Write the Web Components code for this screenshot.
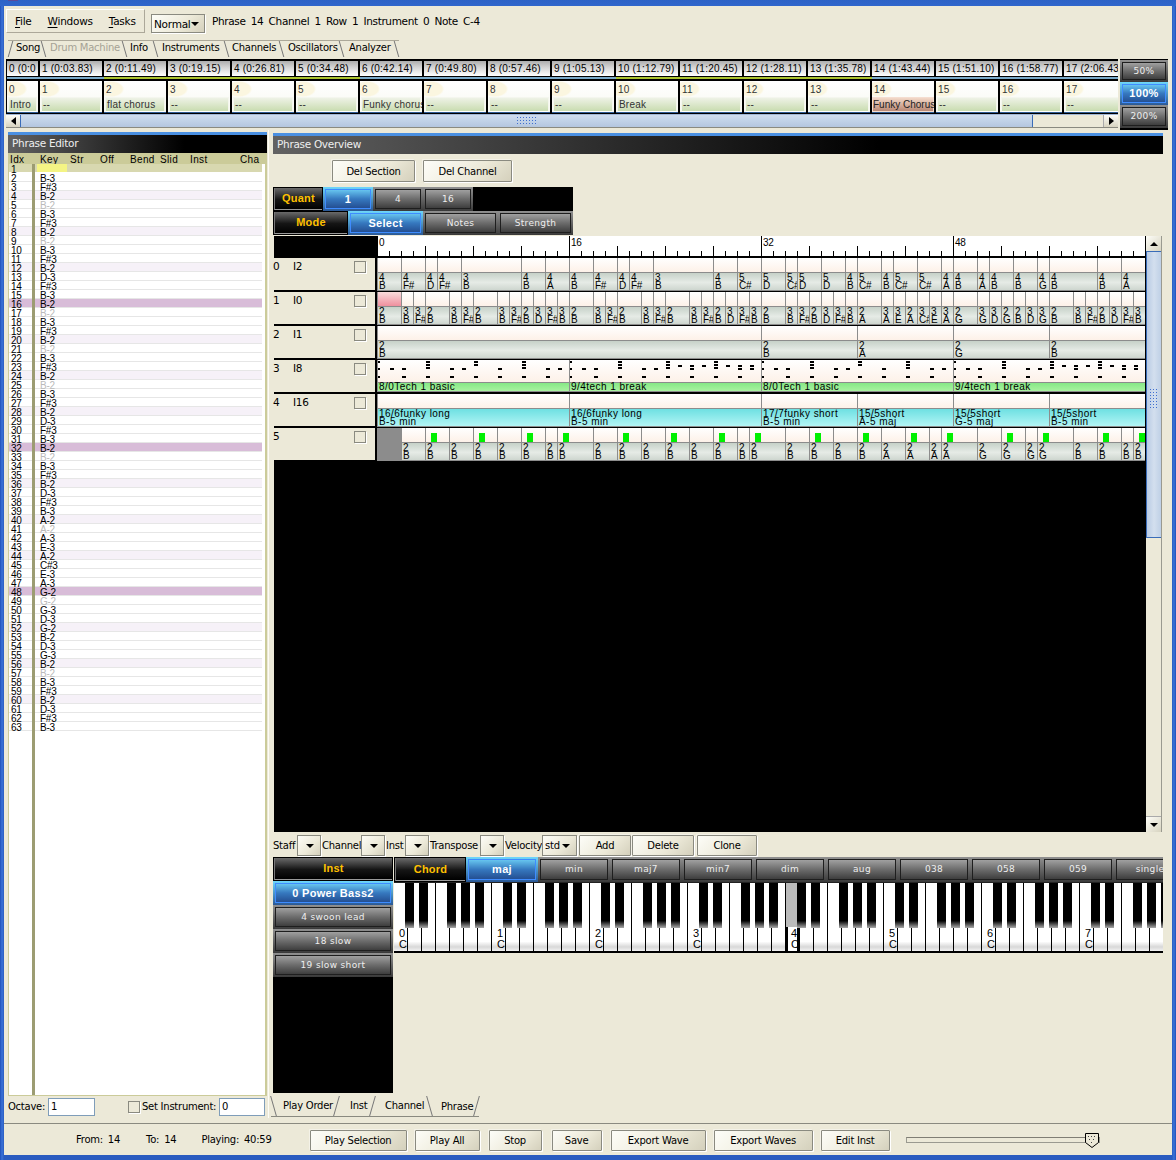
<!DOCTYPE html>
<html><head><meta charset="utf-8"><style>
html,body{margin:0;padding:0;background:#2a5cc0}
</style></head><body>
<x-app></x-app>
<script>
const def=(name,css,render)=>customElements.define(name,class extends HTMLElement{
  connectedCallback(){ if(this.shadowRoot)return; const s=this.attachShadow({mode:'open'}); s.innerHTML='<style>'+css+'</style>'+render(this); }
});
const UI='font:10px/12px "DejaVu Sans",sans-serif;letter-spacing:-.25px;color:#000;';
const NUM='font:10px/8px "Liberation Sans",sans-serif;color:#000;';

def('x-xp',`:host{display:inline-flex;box-sizing:border-box;align-items:center;justify-content:center;flex:none;${UI}
 height:22px;padding-top:1px;border:1px solid #8a8a80;box-shadow:1px 1px 0 #fff,-1px -1px 0 #f4f2e8;background:linear-gradient(135deg,#fdfdf8,#ece9d8 60%,#d4d0bc);border-radius:1px}`,()=>'<slot></slot>');

def('x-combo',`:host{display:inline-flex;box-sizing:border-box;align-items:center;justify-content:space-between;flex:none;${UI}
 height:22px;border:1px solid #8a8a80;box-shadow:1px 1px 0 #fff;background:linear-gradient(135deg,#fdfdf8,#ece9d8 60%,#d4d0bc);padding:0 6px 0 2px}
 i{width:0;height:0;border:4px solid transparent;border-top:4px solid #000;border-bottom:0;margin-left:auto}`,()=>'<slot></slot><i></i>');

def('x-glass',`:host{display:inline-flex;box-sizing:border-box;padding:2px;background:linear-gradient(#909090,#3a3a3a);height:24px;flex:none}
 div{flex:1;box-sizing:border-box;min-width:0;border:1px solid #1e1e1e;background:linear-gradient(#a0a0a0,#6c6c6c 50%,#3e3e3e);color:#eee;
 font:9px/1 "DejaVu Sans",sans-serif;letter-spacing:.35px;display:flex;align-items:center;justify-content:center;white-space:nowrap;overflow:hidden}
 :host([kind=on]){background:linear-gradient(#6ed6fa,#2a5896)}
 :host([kind=on]) div{border-color:#3f8cff;background:linear-gradient(#66c4ee,#3678bf 50%,#244f92);color:#fff;font:bold 11px/1 "Liberation Sans",sans-serif;letter-spacing:.3px}
 :host([kind=tag]){background:#000;padding:1px}
 :host([kind=tag]) div{border:0;border-left:1px solid #777;border-bottom:1px solid #999;background:linear-gradient(#6a6a6a,#151515 55%,#000);color:#ffc000;font:bold 11px/1 "Liberation Sans",sans-serif;letter-spacing:.2px}`,
 ()=>'<div><slot></slot></div>');

def('x-paneltitle',`:host{display:block;${UI}color:#eee;font-size:10.5px;border-top:3px solid #4a90e2;height:18px;line-height:17px;padding-left:4px;letter-spacing:-.3px;
 background:linear-gradient(90deg,#626262,#000 68%)}`,()=>'<slot></slot>');

def('x-check',`:host{display:inline-block;box-sizing:border-box;width:12px;height:12px;border:1px solid #8a8a80;background:#ece9d8;box-shadow:1px 1px 0 #fff;flex:none}`,()=>'');

def('x-menubar',`:host{display:flex;box-sizing:border-box;width:139px;height:24px;align-items:center;gap:16px;padding-left:8px;${UI}font-size:10.5px;border:1px solid #aca899;border-top-color:#fff;border-left-color:#fff;background:#ece9d8}
 u{text-decoration-thickness:1px;text-underline-offset:2px}`,()=>'<span><u>F</u>ile</span><span><u>W</u>indows</span><span><u>T</u>asks</span>');

def('x-tabs',`:host{display:flex;${UI}height:17px}
 b{font-weight:400;display:flex;box-sizing:border-box;align-items:center;position:relative;white-space:nowrap;height:17px;border-top:1px solid #aca899}
 b span{position:relative;top:-1px}
 b::after{content:"";position:absolute;right:2px;top:0;bottom:0;width:1px;background:#777;transform:skewX(16deg)}
 b.g{color:#a5a295}
 b.a::before{content:"";position:absolute;left:2px;top:0;bottom:0;width:1px;background:#777;transform:skewX(-16deg)}
 :host([flip]){height:21px}
 :host([flip]) b{border-top:0;border-bottom:1px solid #8a8a80;height:21px}
 :host([flip]) b span{top:0}
 :host([flip]) b::after{transform:skewX(-16deg)}
 :host([flip]) b.a::before{transform:skewX(16deg)}
 :host([flip]) b.x::after{display:none}
 :host([flip]) b:last-child span{top:1px}`,
 e=>JSON.parse(e.getAttribute('items')).map(t=>`<b class="${t[3]||''}" style="width:${t[1]}px;padding-left:${t[2]}px"><span>${t[0]}</span></b>`).join(''));

def('x-songcol',`:host{display:flex;flex-direction:column;flex:none;box-sizing:border-box;width:64px;height:52px;overflow:hidden}
 .h{height:15px;margin-right:2px;background:linear-gradient(#aeaeae,#d6d6d6 45%,#fff);font:10px/16px "Liberation Sans",sans-serif;letter-spacing:.22px;color:#000;white-space:nowrap;overflow:hidden;padding-left:2px}
 .s{height:2px;margin-top:1px;background:var(--c)}
 .b{height:32px;margin:2px 2px 0 0;background:linear-gradient(#fff,#f7f8f0);position:relative;display:flex;flex-direction:column;overflow:hidden;box-sizing:border-box;border-bottom:1px solid #2c5a90}
 .n{position:relative;height:17px;padding:4px 0 0 2px;box-sizing:border-box;font:10px/10px "Liberation Sans",sans-serif;letter-spacing:.3px;color:#333}
 .n::before{content:"";position:absolute;left:0;top:0;width:20px;height:16px;background:radial-gradient(ellipse at 35% 50%,#fbf6e0 60%,transparent 72%)}
 .n span{position:relative}
 .l{flex:1;margin:0 1px;border:1px solid #f4f6ee;border-bottom-color:#fff;background:linear-gradient(#eef2e6,#c9dcb0);font:10px/13px "Liberation Sans",sans-serif;letter-spacing:.2px;color:#333;white-space:nowrap;padding-left:1px}
 :host([hot]) .l{margin:0;border-color:#f4ddd0;background:linear-gradient(#f3d8c8,#b98874);color:#222;letter-spacing:0;padding-left:0}`,
 e=>`<div class="h">${e.getAttribute('t')}</div><div class="s" style="--c:${e.getAttribute('c')}"></div><div class="b"><div class="n"><span>${e.getAttribute('n')}</span></div><div class="l">${e.getAttribute('l')}</div></div>`);

const songT=['0 (0:0','1 (0:03.83)','2 (0:11.49)','3 (0:19.15)','4 (0:26.81)','5 (0:34.48)','6 (0:42.14)','7 (0:49.80)','8 (0:57.46)','9 (1:05.13)','10 (1:12.79)','11 (1:20.45)','12 (1:28.11)','13 (1:35.78)','14 (1:43.44)','15 (1:51.10)','16 (1:58.77)','17 (2:06.43)'];
const songL={0:'Intro',2:'flat chorus',6:'Funky chorus',10:'Break',14:'Funky Chorus'};
const BL='#7aa9c9',GR='#abc32f';
const songC=i=>(i<2||(i>=6&&i<10)||i>=14)?BL:GR;

def('x-song',`:host{display:block;box-sizing:border-box;width:1112px;height:69px;background:#000;overflow:hidden}
 .c{display:flex;padding:2px 0 0 1px;height:55px;box-sizing:border-box;overflow:hidden;background:#000}
 x-songcol:first-child{width:33px}
 .sb{display:flex;height:14px;background:#ece9d8;border-top:1px solid #9fb6d6;border-bottom:1px solid #8a8a80;box-sizing:border-box}
 .btn{width:15px;flex:none;background:linear-gradient(#fdfdf8,#d8d4c0);display:flex;align-items:center;justify-content:center;box-sizing:border-box;border-right:1px solid #3a6cb8}
 .btn i{width:0;height:0;border:4px solid transparent}
 .l i{border-right:5px solid #000;border-left:0}
 .r{border-right:0;border-left:1px solid #aaa}
 .r i{border-left:5px solid #000;border-right:0}
 .th{width:1011px;flex:none;background:linear-gradient(#d0dded,#c2d3e8 45%,#b4c6df);border-right:1px solid #3a6cb8;display:flex;justify-content:center;align-items:center}
 .th b{display:block;width:22px;height:10px;background:radial-gradient(circle,#3f6fd0 .7px,transparent 1px) 0 0/3px 3px}
 .e{flex:1}`,
 ()=>`<div class="c">${songT.map((t,i)=>`<x-songcol t="${t}" n="${i}" c="${songC(i)}" l="${songL[i]||'--'}" ${i==14?'hot':''}></x-songcol>`).join('')}</div>
 <div class="sb"><div class="btn l"><i></i></div><div class="th"><b></b></div><div class="e"></div><div class="btn r"><i></i></div></div>`);

def('x-zoomset',`:host{display:flex;flex-direction:column;width:48px;height:71px;background:#000;padding-top:1px;box-sizing:border-box}
 x-glass{height:23px}
 x-glass.a{height:22px}`,()=>'<x-glass class="a">50%</x-glass><x-glass kind="on">100%</x-glass><x-glass>200%</x-glass>');

/* ---------- Phrase editor ---------- */
const seq=('|B-3|F#3|B-2|~B-2|B-3|F#3|B-2|~B-2|B-3|F#3|B-2|D-3|F#3|B-3|B-2|~B-2|B-3|F#3|B-2|~B-2|B-3|F#3|B-2|~B-2|B-3|F#3|B-2|D-3|F#3|B-3|B-2|~B-2|B-3|F#3|B-2|D-3|F#3|B-3|A-2|~A-2|A-3|E-3|A-2|C#3|E-3|A-3|G-2|~G-2|G-3|D-3|G-2|B-2|D-3|G-3|B-2|~B-2|B-3|F#3|B-2|D-3|F#3|B-3').split('|');
def('x-field',`:host{display:inline-block;box-sizing:border-box;height:18px;background:#fff;border:1px solid #7f9db9;${UI}line-height:16px;padding-left:2px;flex:none}`,()=>'<slot></slot>');
def('x-editor',`:host{display:flex;flex-direction:column;box-sizing:border-box;width:262px;height:988px;padding:2px 1px 0 1px;border:1px solid #fdfcf6;border-width:0 1px 0 0;${UI}}
 .tb{display:flex;flex-direction:column;height:943px;box-sizing:border-box;border:solid #cbcb99;border-width:0 2px 1px 1px;background:#fff}
 .hd{height:11px;background:#cbcb99;display:grid;grid-template-columns:30px 30px 30px 30px 30px 30px 50px 40px;padding-left:1px;font:10px/13px "Liberation Sans",sans-serif;letter-spacing:.35px;white-space:nowrap}
 .bd{flex:1;display:grid;grid-template-columns:23px 3px 1fr;min-height:0}
 .ix,.ke{display:flex;flex-direction:column}
 .dv{background:#9c9c72}
 .r{height:9px;box-sizing:border-box;font:10px/8.5px "Liberation Sans",sans-serif;border-bottom:1px solid #e6e6e6;white-space:nowrap;padding:2px 0 0 2px;flex:none}
 .ke{padding-right:3px}
 .ke .r{padding-left:5px}
 .t{background:#f6f1f8}
 .p{background:#d8bcd8}
 .s{background:#d8d8b0;border-bottom:1px solid #fff}
 .g{color:#bbb}
 .y{display:block;width:30px;height:8px;background:#f4f484;margin:-2px 0 0 -3px}
 .f{display:flex;align-items:center;height:20px;padding-top:1px;box-sizing:border-box;white-space:nowrap}
 x-field{margin-left:1px}
 .si{width:76px;flex:none;margin-left:2px}`,
 ()=>{
  let ix='',ke='';
  seq.forEach((v,i)=>{const n=i+1,g=v[0]=='~',p=n%16==0,t=n%4==0&&!p;
   const c=i==0?'s':p?'p':t?'t':'';
   ix+=`<div class="r ${i==0?'s':p?'p':t?'t':''}">${n}</div>`;
   ke+=`<div class="r ${c} ${g?'g':''}">${i==0?'<i class="y"></i>':g?v.slice(1):v}</div>`;});
  return `<x-paneltitle>Phrase Editor</x-paneltitle>
  <div class="tb"><div class="hd"><span>Idx</span><span>Key</span><span>Str</span><span>Off</span><span>Bend</span><span>Slid</span><span>Inst</span><span>Cha</span></div>
  <div class="bd"><div class="ix">${ix}</div><div class="dv"></div><div class="ke">${ke}</div></div></div>
  <div class="f"><span style="width:39px;flex:none">Octave:</span><x-field style="width:47px">1</x-field><x-check style="margin-left:33px"></x-check><span class="si">Set Instrument:</span><x-field style="width:46px">0</x-field></div>`;
 });

/* ---------- Tracks ---------- */
const dashes=pat=>{let s='';pat.forEach((ys,t)=>{(ys||[]).forEach(y=>{s+=`<rect x="${t*12}" y="${y}" width="${t?4:2}" height="2"/>`;});if(t%2==0)s+=`<rect x="${t*12}" y="16" width="${t?4:2}" height="2"/>`;});
 return `<svg width="192" height="22" shape-rendering="crispEdges" style="display:block;position:absolute;left:0;top:0">${s}</svg>`;};
const T3=[1,4,7],M=[8];
const PA=[[1,8],M,M,0,T3,0,M,M,[1,4],0,M,0,T3,0,M,M];
const PB=[[1,8],M,M,0,T3,0,M,M,T3,[5],[5,8],[5],T3,[5],[5,8],[5,8]];
def('x-track',`:host{display:grid;grid-template-columns:101px 2px 768px;height:34px;box-sizing:border-box;padding-bottom:2px;background:#000}
 .lb{background:#ece9d8;position:relative;${UI}font-size:10.5px;line-height:16px;display:grid;grid-template-columns:19px 61px 1fr;align-items:start;height:32px;box-sizing:border-box}
 .lb span:first-child{margin-left:-1px}
 .lb x-check{margin-top:3px}
 .cells{grid-column:3;display:grid;grid-template-columns:repeat(64,12px);height:32px}
 .n{display:flex;flex-direction:column;min-width:0;border-left:1px solid #8c8c8c;box-sizing:border-box;position:relative}
 .u{height:var(--u,14px);background:linear-gradient(#fff,#fdf1e8);flex:none;position:relative}
 .u.sel{background:linear-gradient(#f9dcdc,#ef8f9e)}
 .d{flex:1;border-top:1px solid #8c8c8c;border-bottom:1px solid #8c8c8c;background:linear-gradient(#c6d1c8,#e6ebe6 55%,#ced6cf);${NUM}padding:1px 0 0 1px;white-space:nowrap;box-sizing:border-box}
 .d.g{background:linear-gradient(#86e886,#a9f2a0);font:10px/8px "Liberation Sans",sans-serif;letter-spacing:.45px;padding:0 0 0 1px}
 .d.c{background:linear-gradient(#6ee0e2,#b2f5f5);font:10px/8px "Liberation Sans",sans-serif;letter-spacing:.45px;padding:1px 0 0 1px}
 .off{background:#8c8c8c;grid-column:1/3}
 .gm{position:absolute;left:5px;top:5px;width:6px;height:9px;background:#00f000}`,
 e=>{
  const a=e.getAttribute.bind(e),raw=a('notes').split(',').map(x=>{const i=x.indexOf(':');return [+x.slice(0,i),x.slice(i+1)];});
  const kind=a('kind')||'',gm=(a('gm')||'').split(',').filter(Boolean).map(Number);
  const pats={0:PA,16:PB,32:PA,48:PB};
  const cells=raw.map((r,i)=>{const end=i+1<raw.length?raw[i+1][0]:64;let label='',cls='',u='';
    if(kind=='g'){cls='g';label=r[1];u=dashes(pats[r[0]]);}
    else if(kind=='c'){cls='c';label=r[1].replace('|','<br>');}
    else label=r[1][0]+'<br>'+r[1].slice(1);
    const sel=a('sel')!=null&&i==0?'sel':'';
    return `<div class="n" style="grid-column:${r[0]+1}/${end+1};${kind=='g'?'--u:22px':''}"><div class="u ${sel}">${u}${gm.includes(r[0])?'<i class="gm"></i>':''}</div><div class="d ${cls}">${label}</div></div>`;}).join('');
  return `<div class="lb"><span>${a('i')}</span><span>${a('inst')||''}</span><x-check></x-check></div><div></div><div class="cells">${a('off')!=null?'<div class="off"></div>':''}${cells}</div>`;
 });

def('x-ruler',`:host{display:grid;grid-template-columns:103px repeat(4,192px);height:22px;background:#000}
 div{box-sizing:border-box;background-color:#fff;border-left:1px solid #000;font:10px/13px "Liberation Sans",sans-serif;padding-left:1px;color:#000;
 background-image:linear-gradient(#000,#000),repeating-linear-gradient(90deg,#000 0 1px,transparent 1px 48px),repeating-linear-gradient(90deg,#000 0 1px,transparent 1px 12px);
 background-size:100% 2px,100% 10px,100% 5px;background-position:0 100%,47px calc(100% - 2px),11px calc(100% - 2px);background-repeat:no-repeat}
 div.blank{background:#000;border:0}`,()=>'<div class="blank"></div><div>0</div><div>16</div><div>32</div><div>48</div>');

def('x-vscroll',`:host{display:flex;flex-direction:column;width:16px;height:596px;background:#ece9d8;flex:none;box-sizing:border-box;border-right:1px solid #9a9a90}
 .b{height:16px;flex:none;background:linear-gradient(135deg,#fdfdf8,#d8d4c0);display:flex;align-items:center;justify-content:center;border-bottom:1px solid #3a6cb8;box-sizing:border-box}
 .b i{width:0;height:0;border:4px solid transparent;border-top:0;border-bottom:4px solid #000}
 .b.d{border-bottom:0;border-top:1px solid #aaa}.b.d i{border:4px solid transparent;border-bottom:0;border-top:4px solid #000}
 .t{height:286px;flex:none;background:linear-gradient(90deg,#b9cbe4,#d3dfee 50%,#bfd0e6);border:solid #3a6cb8;border-width:0 0 1px 1px;display:flex;align-items:center;justify-content:center;box-sizing:border-box}
 .t b{display:block;width:10px;height:22px;margin-top:9px;background:radial-gradient(circle,#3f6fd0 .7px,transparent 1px) 0 0/3px 3px}
 .e{flex:1}`,()=>'<div class="b"><i></i></div><div class="t"><b></b></div><div class="e"></div><div class="b d"><i></i></div>');

/* ---------- Piano ---------- */
def('x-piano',`:host{display:block;position:relative;height:71px;width:769px;overflow:hidden;border-top:1px solid #222;border-bottom:2px solid #000;box-sizing:border-box;background:#fff;${NUM}}
 .w{display:flex;height:100%}
 .w i{flex:none;width:14px;box-sizing:border-box;border-right:1px solid #000;background:linear-gradient(#fff 0 86%,#d8d8d8 94%,#f2f2f2);font-style:normal;text-align:left;padding-left:5px;display:flex;flex-direction:column;justify-content:flex-end;line-height:11px;font-size:11px;padding-bottom:1px;letter-spacing:0}
 .w i.on{background:linear-gradient(90deg,#000 2px,transparent 2px 11px,#000 11px) 0 100%/100% 24px no-repeat,linear-gradient(#bbb 0 44px,#fff 44px)}
 .k{position:absolute;top:0;width:9px;height:45px;background:linear-gradient(#000 0 84%,#555 92%,#aaa)}`,
 ()=>{let w='',k='';
  for(let i=0;i<56;i++){const oct=Math.floor(i/7),c=i%7==0;w+=`<i class="${i==28?'on':''}">${c?`<span>${oct}</span><span>C</span>`:''}</i>`;}
  for(let o=0;o<8;o++)[11,25,53,67,81].forEach(x=>{k+=`<b class="k" style="left:${o*98+x}px"></b>`;});
  return `<div class="w">${w}</div>${k}`;});

/* ---------- Overview ---------- */
const notes0='0:4B,2:4F#,4:4D,5:4F#,7:3B,12:4B,14:4A,16:4B,18:4F#,20:4D,21:4F#,23:3B,28:4B,30:5C#,32:5D,34:5C#,35:5D,37:5D,39:4B,40:5C#,42:4B,43:5C#,45:5C#,47:4A,48:4B,50:4A,51:4B,53:4B,55:4G,56:4B,60:4B,62:4A';
const notes1='0:2B,2:3B,3:3F#,4:2B,6:3B,7:3F#,8:2B,10:3B,11:3F#,12:2B,13:3D,14:3F#,15:3B,16:2B,18:3B,19:3F#,20:2B,22:3B,23:3F#,24:2B,26:3B,27:3F#,28:2B,29:3D,30:3F#,31:3B,32:2B,34:3B,35:3F#,36:2B,37:3D,38:3F#,39:3B,40:2A,42:3A,43:3E,44:2A,45:3C#,46:3E,47:3A,48:2G,50:3G,51:3D,52:2G,53:2B,54:3D,55:3G,56:2B,58:3B,59:3F#,60:2B,61:3D,62:3F#,63:3B';
const notes5='2:2B,4:2B,6:2B,8:2B,10:2B,12:2B,14:2B,15:2B,18:2B,20:2B,22:2B,24:2B,26:2B,28:2B,30:2B,31:2B,34:2B,36:2B,38:2B,40:2B,42:2A,44:2A,46:2A,47:2A,50:2G,52:2G,54:2G,55:2G,58:2B,60:2B,62:2B,63:2B';
def('x-overview',`:host{display:flex;flex-direction:column;box-sizing:border-box;width:894px;height:988px;padding:3px 3px 0 1px;${UI}}
 .dl{display:flex;height:33px;padding:6px 0 0 59px;gap:8px;box-sizing:border-box}
 .q{display:flex;width:300px;height:24px;background:#000}
 .area{display:flex;height:596px;margin:1px 0 0 1px}
 .tracks{width:872px;background:#000;flex:none}
 .tool{display:flex;align-items:center;height:23px;margin-top:2px;white-space:nowrap}
 .tool x-combo,.tool x-xp{height:21px}
 .tool span{flex:none}
 .bot{display:flex;height:236px}
 .ins{width:120px;flex:none;background:#000;display:flex;flex-direction:column}
 .ins x-glass{width:120px}
 .keys{margin-left:1px;width:769px;flex:none;overflow:hidden}
 .ch{display:flex;height:25px;width:769px;overflow:hidden;background:#000}
 .ch x-glass{width:72px;height:25px}`,
 ()=>`<x-paneltitle>Phrase Overview</x-paneltitle>
 <div class="dl"><x-xp style="width:83px">Del Section</x-xp><x-xp style="width:89px">Del Channel</x-xp></div>
 <div class="q"><x-glass kind="tag" style="width:50px">Quant</x-glass><x-glass kind="on" style="width:50px">1</x-glass><x-glass style="width:50px">4</x-glass><x-glass style="width:50px">16</x-glass></div>
 <div class="q"><x-glass kind="tag" style="width:75px">Mode</x-glass><x-glass kind="on" style="width:75px">Select</x-glass><x-glass style="width:75px">Notes</x-glass><x-glass style="width:75px">Strength</x-glass></div>
 <div class="area"><div class="tracks"><x-ruler></x-ruler>
 <x-track i="0" inst="I2" notes="${notes0}"></x-track>
 <x-track i="1" inst="I0" sel notes="${notes1}"></x-track>
 <x-track i="2" inst="I1" notes="0:2B,32:2B,40:2A,48:2G,56:2B"></x-track>
 <x-track i="3" inst="I8" kind="g" notes="0:8/0Tech 1 basic,16:9/4tech 1 break,32:8/0Tech 1 basic,48:9/4tech 1 break"></x-track>
 <x-track i="4" inst="I16" kind="c" notes="0:16/6funky long|B-5 min,16:16/6funky long|B-5 min,32:17/7funky short|B-5 min,40:15/5short|A-5 maj,48:15/5short|G-5 maj,56:15/5short|B-5 min"></x-track>
 <x-track i="5" off gm="4,8,12,15,20,24,28,31,36,40,44,47,52,55,60,63" notes="${notes5}"></x-track>
 </div><x-vscroll></x-vscroll></div>
 <div class="tool"><span style="width:24px">Staff</span><x-combo style="width:24px"></x-combo><span style="width:40px;padding-left:1px;box-sizing:border-box">Channel</span><x-combo style="width:24px"></x-combo><span style="width:20px;padding-left:1px;box-sizing:border-box">Inst</span><x-combo style="width:24px"></x-combo><span style="width:51px;padding-left:1px;box-sizing:border-box">Transpose</span><x-combo style="width:24px"></x-combo><span style="width:38px;padding-left:1px;box-sizing:border-box">Velocity</span><x-combo style="width:35px">std</x-combo><x-xp style="width:52px;margin-left:2px">Add</x-xp><x-xp style="width:62px;margin-left:1px">Delete</x-xp><x-xp style="width:60px;margin-left:3px">Clone</x-xp></div>
 <div class="bot"><div class="ins"><x-glass kind="tag">Inst</x-glass><x-glass kind="on">0 Power Bass2</x-glass><x-glass>4 swoon lead</x-glass><x-glass>18 slow</x-glass><x-glass>19 slow short</x-glass></div>
 <div class="keys"><div class="ch"><x-glass kind="tag">Chord</x-glass><x-glass kind="on">maj</x-glass>${['min','maj7','min7','dim','aug','038','058','059','single'].map(t=>`<x-glass>${t}</x-glass>`).join('')}</div><x-piano></x-piano></div></div>
 <x-tabs flip style="margin:3px 0 0 -2px" items='[["Play Order",68,12,"a"],["Inst",36,11],["Channel",52,10,"x"],["Phrase",52,14,"a"]]'></x-tabs>`);

def('x-slider',`:host{display:block;position:relative;width:194px;height:6px;box-sizing:border-box;border:1px solid #9a9a90;border-top-color:#807e74;background:#ece9d8}
 svg{position:absolute;right:-1px;top:-6px}`,()=>`<svg width="16" height="17" viewBox="0 0 16 17"><path d="M1.5 1.5H14.5V10.5L8 15.5L1.5 10.5Z" fill="#ece9d8" stroke="#000"/><g fill="#444"><rect x="4" y="4" width="1" height="1"/><rect x="7" y="4" width="1" height="1"/><rect x="10" y="4" width="1" height="1"/><rect x="5" y="7" width="1" height="1"/><rect x="9" y="7" width="1" height="1"/><rect x="7" y="10" width="1" height="1"/></g></svg>`);

def('x-status',`:host{display:flex;align-items:center;height:32px;box-sizing:border-box;border-top:1px solid #8a8a80;${UI}padding:1px 0 0 72px;word-spacing:2px}
 span{flex:none;white-space:nowrap}
 x-xp{word-spacing:0;height:21px}
 x-slider{margin-left:16px}`,
 ()=>`<span>From: 14</span><span style="margin-left:26px">To: 14</span><span style="margin-left:25px">Playing: 40:59</span>
 <x-xp style="width:97px;margin-left:38px">Play Selection</x-xp><x-xp style="width:65px;margin-left:8px">Play All</x-xp><x-xp style="width:53px;margin-left:9px">Stop</x-xp><x-xp style="width:50px;margin-left:10px">Save</x-xp><x-xp style="width:95px;margin-left:9px">Export Wave</x-xp><x-xp style="width:99px;margin-left:8px">Export Waves</x-xp><x-xp style="width:69px;margin-left:8px">Edit Inst</x-xp><x-slider></x-slider>`);

def('x-app',`:host{display:block;width:1176px;height:1160px;overflow:hidden;background:linear-gradient(90deg,#1f4fb8,#3b73d8 2px,#2a5cc0 4px,#2a5cc0 1172px,#3b73d8 1174px,#1f4fb8);${UI}}
 .title{height:6px;background:linear-gradient(#2c62c6,#2f66cc);padding-left:8px;box-sizing:border-box}
 .title i{display:block;width:10px;height:1px;background:#5a4a9a}
 .body{height:1149px;margin:0 4px;background:#ece9d8;display:flex;flex-direction:column}
 .bar{display:flex;height:30px;padding:3px 0 0 2px;box-sizing:border-box;align-items:flex-start}
 .bar x-combo{width:54px;height:19px;margin:5px 0 0 6px;font-size:10.5px}
 .info{margin:6px 0 0 7px;word-spacing:2.2px;white-space:nowrap;font-size:10.5px;letter-spacing:-.35px}
 .tabrow{height:23px;padding:4px 0 0 4px;box-sizing:border-box}
 .song{display:flex;height:71px;padding-left:2px;gap:2px}
 .main{display:flex;height:988px;padding-left:3px;gap:3px}
 x-status{margin-top:5px}`,
 ()=>`<div class="title"><i></i></div><div class="body">
 <div class="bar"><x-menubar></x-menubar><x-combo>Normal</x-combo><div class="info">Phrase 14 Channel 1 Row 1 Instrument 0 Note C-4</div></div>
 <div class="tabrow"><x-tabs items='[["Song",38,8,"a"],["Drum Machine",81,4,"g"],["Info",31,3],["Instruments",71,4],["Channels",55,3],["Oscillators",60,4],["Analyzer",55,5]]'></x-tabs></div>
 <div class="song"><x-song></x-song><x-zoomset></x-zoomset></div>
 <div class="main"><x-editor></x-editor><x-overview></x-overview></div>
 <x-status></x-status></div>`);
</script>
</body></html>
